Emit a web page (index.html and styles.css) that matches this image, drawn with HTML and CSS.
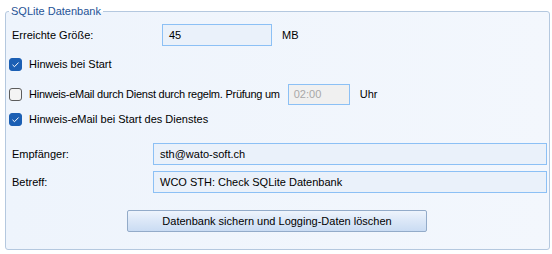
FILE: index.html
```html
<!DOCTYPE html>
<html>
  <head>
    <meta charset="utf-8" />
    <link rel="stylesheet" href="styles.css">
  </head>
  <body>
    <fieldset class="group">
      <legend>SQLite Datenbank</legend>
      <div class="row size-row">
        <span class="label">Erreichte Größe:</span>
        <span class="field size-field">45</span>
        <span class="unit">MB</span>
      </div>
      <div class="row check-row first-check">
        <span class="box checked">
          <svg width="13" height="13" viewBox="0 0 13 13"><path d="M3.5 6.8 L5.5 8.7 L9.6 4.5" fill="none" stroke="#fff" stroke-width="1"/></svg>
        </span>
        <span>Hinweis bei Start</span>
      </div>
      <div class="row check-row time-row">
        <span class="box"></span>
        <span class="long-label">Hinweis-eMail durch Dienst durch regelm. Prüfung um</span>
        <span class="field time-field">02:00</span>
        <span class="unit">Uhr</span>
      </div>
      <div class="row check-row third-check">
        <span class="box checked">
          <svg width="13" height="13" viewBox="0 0 13 13"><path d="M3.5 6.8 L5.5 8.7 L9.6 4.5" fill="none" stroke="#fff" stroke-width="1"/></svg>
        </span>
        <span>Hinweis-eMail bei Start des Dienstes</span>
      </div>
      <div class="row mail-row first-mail">
        <span class="label mail-label">Empfänger:</span>
        <span class="field mail-field">sth@wato-soft.ch</span>
      </div>
      <div class="row mail-row">
        <span class="label mail-label">Betreff:</span>
        <span class="field mail-field">WCO STH: Check SQLite Datenbank</span>
      </div>
      <div class="button-row">
        <button class="button">Datenbank sichern und Logging-Daten löschen</button>
      </div>
    </fieldset>
  </body>
</html>
```

FILE: styles.css
```css
html,
body {
  margin: 0;
  padding: 0;
  width: 552px;
  height: 254px;
  background: #ffffff;
  font-family: "Liberation Sans", Arial, sans-serif;
  font-size: 11px;
  color: #000000;
  overflow: hidden;
}
.group {
  box-sizing: border-box;
  margin: 4px 0 0 5px;
  width: 545px;
  height: 246px;
  padding: 6px 2px 0 6px;
  border: 1px solid #b4c8df;
  border-radius: 3px;
  background: linear-gradient(90deg, #eef4fc 0%, #f3f7fd 100%);
}
.group legend {
  padding: 0 2px;
  margin-left: -3px;
  font-size: 11px;
  line-height: 14px;
  color: #1f5396;
}
.row {
  display: flex;
  align-items: center;
  height: 22px;
}
.label {
  width: 150px;
}
.field {
  box-sizing: border-box;
  height: 22px;
  border: 1px solid #8cc0f5;
  background: #eaf1fa;
  display: flex;
  align-items: center;
  padding-left: 6px;
}
.size-field {
  width: 110px;
}
.unit {
  margin-left: 10px;
}
.check-row {
  margin-left: -3px;
  height: 16px;
}
.first-check {
  margin-top: 10px;
}
.time-row {
  height: 22px;
  margin-top: 11px;
}
.third-check {
  margin-top: 6px;
}
.long-label {
  letter-spacing: -0.25px;
}
.box {
  box-sizing: border-box;
  width: 13px;
  height: 13px;
  margin-right: 7px;
  border: 1px solid #5c5c5c;
  border-radius: 3px;
  background: #f4f4f4;
}
.box.checked {
  border-color: #1b5fb4;
  background: #1b5fb4;
}
.box svg {
  display: block;
  margin: -1px;
}
.time-field {
  width: 62px;
  height: 21px;
  margin-left: 8px;
  background: #f0f0f0;
  color: #a8a8a8;
  padding-left: 5px;
}
.mail-row {
  margin-top: 6px;
}
.first-mail {
  margin-top: 16px;
}
.mail-label {
  width: 141px;
}
.mail-field {
  flex: 1;
}
.button-row {
  margin-top: 17px;
  padding-left: 115px;
}
.button {
  width: 300px;
  height: 22px;
  padding: 0;
  border: 1px solid #93abc9;
  border-radius: 2px;
  background: linear-gradient(180deg, #eef4fc 0%, #dbe7f7 50%, #cadcf3 100%);
  font-family: "Liberation Sans", Arial, sans-serif;
  font-size: 11px;
  color: #000000;
}
```
